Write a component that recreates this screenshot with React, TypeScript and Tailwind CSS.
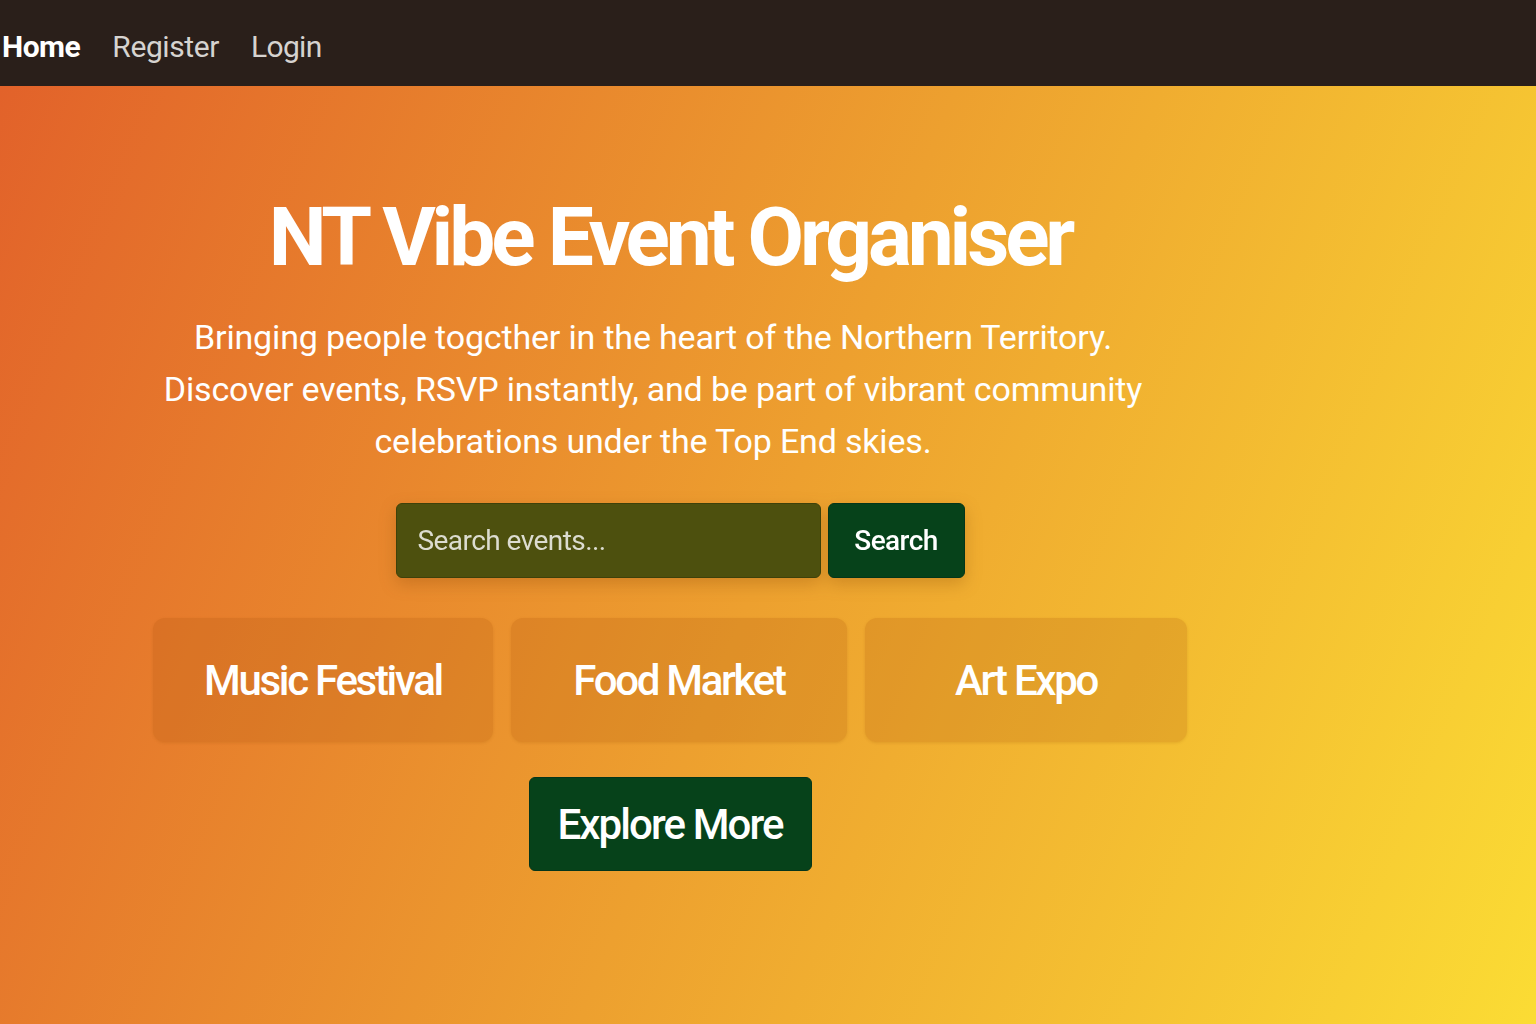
import React, { useState } from 'react';

const events = [
  { name: 'Music Festival', width: 'w-[340px]' },
  { name: 'Food Market', width: 'w-[336px]' },
  { name: 'Art Expo', width: 'w-[322px]' },
];

const App = () => {
  const [query, setQuery] = useState('');

  return (
    <div className="min-h-screen flex flex-col font-['Roboto',sans-serif]">
      <nav className="h-[86px] bg-[#2a1f1a] flex items-center gap-8 pl-[2px] pt-[6px]">
        <a href="#" className="text-[30px] font-bold text-white tracking-[-0.5px]">Home</a>
        <a href="#" className="text-[30px] text-[#d6d3d0] tracking-[-0.4px]">Register</a>
        <a href="#" className="text-[30px] text-[#d6d3d0] tracking-[-0.7px]">Login</a>
      </nav>

      <main className="flex-1 h-[938px] bg-[linear-gradient(112deg,#e2622a_0%,#eda02f_50%,#fbdc34_100%)]">
        <div className="w-[1340px] flex flex-col items-center pt-[110px]">
          <h1 className="text-[82px] leading-none font-bold text-white tracking-[-0.05em]">
            NT Vibe Event Organiser
          </h1>
          <p className="mt-[33px] mr-[34px] w-[1040px] text-center text-[34px] leading-[52px] text-white tracking-[-0.005em]">
            Bringing people togcther in the heart of the Northern Territory.
            <br />
            Discover events, RSVP instantly, and be part of vibrant community
            <br />
            celebrations under the Top End skies.
          </p>

          <form
            onSubmit={(e) => e.preventDefault()}
            className="mt-[36px] ml-[20px] flex items-stretch gap-[7px] drop-shadow-[0_6px_8px_rgba(120,60,0,0.25)]"
          >
            <input
              type="text"
              value={query}
              onChange={(e) => setQuery(e.target.value)}
              placeholder="Search events..."
              className="w-[425px] h-[75px] px-[21px] rounded-md bg-[#4d500e] border border-[#3e410a] text-[28px] text-white placeholder-[#dcdcd0] tracking-[-0.02em] focus:outline-none"
            />
            <button
              type="submit"
              className="w-[137px] h-[75px] rounded-md bg-[#06421a] border border-[#04351a] text-[28px] font-medium text-white tracking-[-0.02em]"
            >
              Search
            </button>
          </form>

          <div className="mt-[40px] flex gap-[18px]">
            {events.map((ev) => (
              <div
                key={ev.name}
                className={`${ev.width} h-[124px] rounded-xl bg-[#a85008]/[0.2] shadow-[0_1px_3px_rgba(150,80,0,0.18)] flex items-center justify-center`}
              >
                <span className="text-[42px] font-medium text-white tracking-[-0.055em]">{ev.name}</span>
              </div>
            ))}
          </div>

          <button className="mt-[35px] w-[283px] h-[94px] rounded-md bg-[#06421a] border border-[#04351a] text-[42px] font-medium text-white tracking-[-0.045em]">
            Explore More
          </button>
        </div>
      </main>
    </div>
  );
};

export default App;
